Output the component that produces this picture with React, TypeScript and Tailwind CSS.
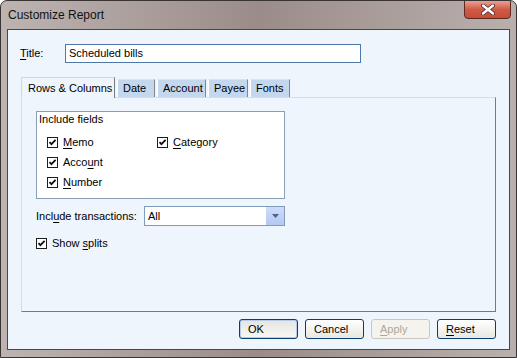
import React from 'react';

const font = { fontFamily: '"Liberation Sans", Arial, sans-serif' };

function CheckBox() {
  return (
    <svg width="11" height="11" viewBox="0 0 11 11" className="shrink-0">
      <rect x="0.5" y="0.5" width="10" height="10" fill="#fff" stroke="#1c1c1c" />
      <path d="M2.5 5.2 L4.4 7.2 L8.6 2.8" fill="none" stroke="#111" strokeWidth="1.8" />
    </svg>
  );
}

function Check({ children }: { children: React.ReactNode }) {
  return (
    <div className="flex items-center gap-[5px] h-[20px]">
      <CheckBox />
      <span>{children}</span>
    </div>
  );
}

function U({ children }: { children: React.ReactNode }) {
  return <span className="underline underline-offset-2">{children}</span>;
}

function Tab({ label, active, w }: { label: string; active?: boolean; w: string }) {
  if (active) {
    return (
      <div
        className={`${w} h-[21px] -mb-px relative z-10 bg-[#eef5fd] border-l border-t border-l-[#d6d6d6] border-t-[#d6d6d6] border-r border-r-[#7a7a7a] flex items-center pl-[6px]`}
      >
        {label}
      </div>
    );
  }
  return (
    <div
      className={`${w} h-[18px] bg-[#c3d7ef] border-l border-t border-l-white border-t-[#e2e2e2] border-r border-r-[#858585] flex items-center pl-[5px]`}
    >
      {label}
    </div>
  );
}

function Button({ children, primary, disabled }: { children: React.ReactNode; primary?: boolean; disabled?: boolean }) {
  let cls = 'border-[#0a3d73] text-black bg-linear-to-b from-white to-[#e8e8e2]';
  if (primary) cls = 'border-[#0a3d73] text-black bg-linear-to-b from-[#e6e6e0] to-[#f6f6f4] shadow-[inset_0_0_0_1px_#b9c9ea]';
  if (disabled) cls = 'border-[#cac8bb] text-[#aca899] bg-[#f4f3ee]';
  return (
    <div className={`w-[59px] h-[20px] rounded-[3px] border flex items-center pl-[8px] ${cls}`}>
      {children}
    </div>
  );
}

export default function App() {
  return (
    <div
      style={font}
      className="w-[517px] h-[358px] rounded-t-[7px] border border-[#3a3333] bg-linear-to-r from-[#bdb4b1] via-[#9b8c89] to-[#b9b0ad] flex flex-col px-[6px] pb-[7px] text-[11px] text-black leading-none overflow-hidden"
    >
      {/* Title bar */}
      <div className="h-[28px] flex justify-between shrink-0">
        <div className="pl-[1px] pt-[8px] text-[12px] text-[#111]">Customize Report</div>
        <div className="-mt-px -mr-[1px] w-[47px] h-[19px] rounded-b-[4px] border border-[#5b2a22] bg-linear-to-b from-[#e6a292] via-[#cf5a45] to-[#c84c36] flex items-center justify-center">
          <svg width="14" height="11" viewBox="0 0 14 11">
            <path d="M2 1.5 L12 9.5 M12 1.5 L2 9.5" stroke="#4a2a25" strokeWidth="4" strokeLinecap="round" />
            <path d="M2 1.5 L12 9.5 M12 1.5 L2 9.5" stroke="#fff" strokeWidth="2.4" strokeLinecap="round" />
          </svg>
        </div>
      </div>

      {/* Client area */}
      <div className="flex-1 border border-[#4d4545] bg-[#eef5fd] flex flex-col">
        <div className="flex items-center h-[19px] mt-[14px] pl-[12px]">
          <div className="w-[45px]">
            <U>T</U>itle:
          </div>
          <div className="w-[296px] h-[19px] border border-[#4d78a8] bg-white flex items-center pl-[3px]">
            Scheduled bills
          </div>
        </div>

        {/* Tabs */}
        <div className="flex items-end gap-[2px] h-[20px] mt-[14px] ml-[13px]">
          <Tab label="Rows & Columns" active w="w-[94px]" />
          <Tab label="Date" w="w-[38px]" />
          <Tab label="Account" w="w-[49px]" />
          <Tab label="Payee" w="w-[40px]" />
          <Tab label="Fonts" w="w-[40px]" />
        </div>

        {/* Panel */}
        <div className="ml-[13px] w-[475px] h-[215px] border border-t-[#dcdcdc] border-l-[#dcdcdc] border-r-[#7a7a7a] border-b-[#7a7a7a] bg-[#eef5fd] flex flex-col">
          <div className="ml-[14px] mt-[13px] w-[249px] h-[88px] border border-[#8a9fb6] bg-white flex flex-col">
            <div className="pl-[2px] pt-[2px] h-[16px]">Include fields</div>
            <div className="mt-[4px] pl-[10px] grid grid-cols-[110px_1fr]">
              <Check>
                <U>M</U>emo
              </Check>
              <Check>
                <U>C</U>ategory
              </Check>
              <Check>
                Acco<U>u</U>nt
              </Check>
              <div />
              <Check>
                <U>N</U>umber
              </Check>
            </div>
          </div>

          <div className="flex items-center mt-[7px] ml-[14px] h-[20px]">
            <div className="w-[108px]">
              Incl<U>u</U>de transactions:
            </div>
            <div className="w-[141px] h-[20px] border border-[#7f9db9] bg-white flex items-center">
              <div className="flex-1 pl-[3px]">All</div>
              <div className="w-[18px] h-full bg-linear-to-b from-[#cddcfb] to-[#b4c8f4] flex items-center justify-center">
                <svg width="7" height="4" viewBox="0 0 7 4">
                  <path d="M0 0 H7 L3.5 4 Z" fill="#4d6185" />
                </svg>
              </div>
            </div>
          </div>

          <div className="mt-[7px] ml-[14px]">
            <Check>
              Show <U>s</U>plits
            </Check>
          </div>
        </div>

        {/* Buttons */}
        <div className="flex justify-end gap-[7px] mt-[7px] pr-[13px]">
          <Button primary>OK</Button>
          <Button>Cancel</Button>
          <Button disabled>
            <U>A</U>pply
          </Button>
          <Button>
            <U>R</U>eset
          </Button>
        </div>
      </div>
    </div>
  );
}
